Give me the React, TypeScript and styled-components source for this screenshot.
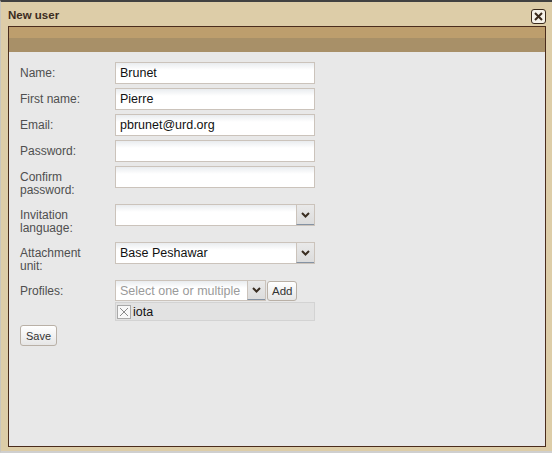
import React from "react";
import styled, { createGlobalStyle } from "styled-components";

const Global = createGlobalStyle`
  html, body { margin: 0; padding: 0; }
  body { background: #ddcda8; font-family: "Liberation Sans", Arial, sans-serif; }
  #root { width: 552px; height: 453px; }
`;

const Window = styled.div`
  box-sizing: border-box;
  width: 552px;
  height: 453px;
  display: flex;
  flex-direction: column;
  background: #ddcda8;
  border-top: 2px solid #414141;
  border-left: 1px solid #c9c6bd;
  border-bottom: 2px solid #cfcfcf;
`;

const TitleBar = styled.div`
  height: 24px;
  display: flex;
  align-items: center;
  justify-content: space-between;
  padding: 0 6px 0 7px;
`;

const Title = styled.span`
  font-size: 11.5px;
  font-weight: bold;
  color: #3b2c1e;
  margin-top: 1px;
`;

const CloseButton = styled.button`
  box-sizing: border-box;
  width: 15px;
  height: 15px;
  padding: 0;
  margin-top: 5px;
  border: 1px solid #3a2a1c;
  border-radius: 3px;
  background: #f6f2ea;
  display: flex;
  align-items: center;
  justify-content: center;
`;

const Panel = styled.div`
  flex: 1;
  margin: 0 6px 4px 7px;
  border: 1px solid #4a2c1c;
  background: #e8e8e8;
  display: flex;
  flex-direction: column;
`;

const Band = styled.div<{ $h: number; $c: string }>`
  height: ${(p) => p.$h}px;
  background: ${(p) => p.$c};
`;

const Form = styled.div`
  padding: 10px 0 0 11px;
  display: flex;
  flex-direction: column;
  gap: 4px;
`;

const Row = styled.div`
  display: grid;
  grid-template-columns: 95px 200px;
  align-items: start;
`;

const Label = styled.div`
  font-size: 12px;
  line-height: 13px;
  color: #4f4f4f;
  padding: 5px 0 3px;
  width: 80px;
`;

const Input = styled.div`
  box-sizing: border-box;
  height: 22px;
  border: 1px solid #cbc3bb;
  background: linear-gradient(#e9ecef 0, #ffffff 7px);
  font-size: 12.5px;
  color: #111;
  padding-left: 4px;
  display: flex;
  align-items: center;
  white-space: nowrap;
  overflow: hidden;
`;

const Select = styled.div`
  box-sizing: border-box;
  height: 22px;
  border: 1px solid #cbc3bb;
  background: linear-gradient(#e9ecef 0, #ffffff 7px);
  display: flex;
  align-items: stretch;
`;

const SelectText = styled.div<{ $placeholder?: boolean }>`
  flex: 1;
  font-size: 12.5px;
  color: ${(p) => (p.$placeholder ? "#9a9a9a" : "#111")};
  padding-left: 4px;
  display: flex;
  align-items: center;
  white-space: nowrap;
  overflow: hidden;
`;

const DropButton = styled.div`
  box-sizing: border-box;
  width: 18px;
  background: linear-gradient(#e9e9e9, #dcdcdc);
  border-left: 1px solid #cbc3bb;
  border-bottom: 1px solid #8492a3;
  display: flex;
  align-items: center;
  justify-content: center;
`;

const ComboLine = styled.div`
  display: flex;
  align-items: flex-start;
`;

const Combo = styled(Select)`
  width: 151px;
  height: 21px;
`;

const SmallButton = styled.button`
  box-sizing: border-box;
  height: 20px;
  padding: 0 4px;
  margin-left: 1px;
  margin-top: 1px;
  border: 1px solid #b9b0a6;
  border-radius: 3px;
  background: linear-gradient(#ffffff, #e6e6e6);
  font-family: "Liberation Sans", Arial, sans-serif;
  font-size: 11.5px;
  color: #333;
`;

const SelectedList = styled.div`
  box-sizing: border-box;
  margin-top: 1px;
  height: 19px;
  border: 1px solid #d3d3d3;
  background: #e2e2e2;
  display: flex;
  align-items: center;
  padding-left: 1px;
  gap: 2px;
`;

const RemoveBox = styled.span`
  box-sizing: border-box;
  width: 14px;
  height: 14px;
  border: 1px solid #a9a9a9;
  background: #f8f8f8;
  display: flex;
  align-items: center;
  justify-content: center;
`;

const ItemText = styled.span`
  font-size: 12.5px;
  color: #111;
`;

const SaveButton = styled(SmallButton)`
  width: 37px;
  height: 21px;
  margin: 0;
  padding: 0;
  align-self: flex-start;
  font-size: 11px;
`;

const Chevron = () => (
  <svg width="9" height="6" viewBox="0 0 9 6">
    <path d="M1 1 L4.5 4.5 L8 1" fill="none" stroke="#3a2e22" strokeWidth="2" />
  </svg>
);

const CloseX = () => (
  <svg width="11" height="11" viewBox="0 0 11 11">
    <path d="M2 2 L9 9 M9 2 L2 9" stroke="#3a2a1c" strokeWidth="2" />
  </svg>
);

const SmallX = () => (
  <svg width="10" height="10" viewBox="0 0 10 10">
    <path d="M1 1 L9 9 M9 1 L1 9" stroke="#8a8a8a" strokeWidth="1" />
  </svg>
);

export default function App() {
  return (
    <>
      <Global />
      <Window>
        <TitleBar>
          <Title>New user</Title>
          <CloseButton aria-label="close">
            <CloseX />
          </CloseButton>
        </TitleBar>
        <Panel>
          <Band $h={11} $c="#bd9e6d" />
          <Band $h={14} $c="#a89068" />
          <Form>
            <Row>
              <Label>Name:</Label>
              <Input>Brunet</Input>
            </Row>
            <Row>
              <Label>First name:</Label>
              <Input>Pierre</Input>
            </Row>
            <Row>
              <Label>Email:</Label>
              <Input>pbrunet@urd.org</Input>
            </Row>
            <Row>
              <Label>Password:</Label>
              <Input />
            </Row>
            <Row>
              <Label>Confirm password:</Label>
              <Input />
            </Row>
            <Row>
              <Label>Invitation language:</Label>
              <Select>
                <SelectText />
                <DropButton>
                  <Chevron />
                </DropButton>
              </Select>
            </Row>
            <Row>
              <Label>Attachment unit:</Label>
              <Select>
                <SelectText>Base Peshawar</SelectText>
                <DropButton>
                  <Chevron />
                </DropButton>
              </Select>
            </Row>
            <Row>
              <Label>Profiles:</Label>
              <div>
                <ComboLine>
                  <Combo>
                    <SelectText $placeholder>Select one or multiple</SelectText>
                    <DropButton>
                      <Chevron />
                    </DropButton>
                  </Combo>
                  <SmallButton>Add</SmallButton>
                </ComboLine>
                <SelectedList>
                  <RemoveBox>
                    <SmallX />
                  </RemoveBox>
                  <ItemText>iota</ItemText>
                </SelectedList>
              </div>
            </Row>
            <SaveButton>Save</SaveButton>
          </Form>
        </Panel>
      </Window>
    </>
  );
}
